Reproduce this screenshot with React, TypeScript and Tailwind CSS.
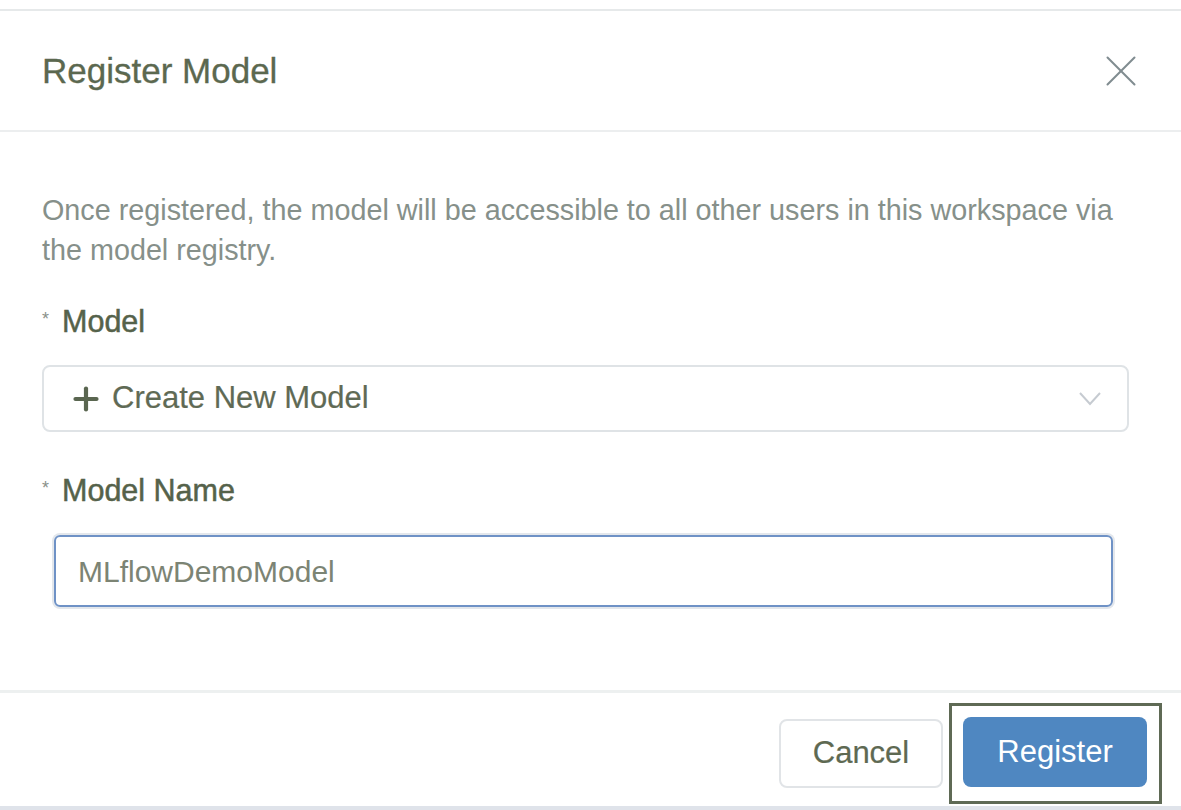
import { X, Plus } from 'lucide-react';

export default function App() {
  return (
    <div className="w-[1181px] h-[810px] bg-white font-[family-name:'Liberation_Sans',Arial,sans-serif] overflow-hidden">
      <div className="h-[9px]" />
      <div className="h-[2px] bg-[#e6e9ea]" />

      <header className="h-[119px] flex items-center justify-between pl-[42px] pr-[33px]">
        <h1 className="text-[35px] leading-[40px] text-[#5b684f] [-webkit-text-stroke:0.3px]">Register Model</h1>
        <X className="w-[54px] h-[54px] text-[#808c90]" strokeWidth={0.9} />
      </header>
      <div className="h-[2px] bg-[#eceeef]" />

      <main className="pt-[58px] pl-[42px] h-[558px]">
        <p className="text-[28.75px] leading-[40px] text-[#86908a] whitespace-nowrap">
          Once registered, the model will be accessible to all other users in this workspace via
          <br />
          the model registry.
        </p>

        <label className="mt-[32px] flex items-center h-[40px] text-[30.5px] text-[#55624a] [-webkit-text-stroke:0.5px]">
          <span className="text-[18px] text-[#8a918a] mr-[13px] -mt-[6px] [-webkit-text-stroke:0px]">*</span>
          Model
        </label>

        <div className="mt-[23px] w-[1087px] h-[67px] border-2 border-[#dfe3e6] rounded-[8px] flex items-center pl-[24px] pr-[25px]">
          <Plus className="w-[36px] h-[36px] text-[#5a6650]" strokeWidth={2.8} />
          <span className="ml-[8px] text-[31px] text-[#5f6a55] [-webkit-text-stroke:0.2px]">Create New Model</span>
          <svg className="ml-auto w-[24px] h-[18px] text-[#c6cbd1]" viewBox="0 0 24 18" fill="none" stroke="currentColor" strokeWidth={2}>
            <polyline points="2,3 12,14 22,3" />
          </svg>
        </div>

        <label className="mt-[39px] flex items-center h-[40px] text-[30.5px] text-[#55624a] [-webkit-text-stroke:0.5px]">
          <span className="text-[18px] text-[#8a918a] mr-[13px] -mt-[6px] [-webkit-text-stroke:0px]">*</span>
          Model Name
        </label>

        <div className="mt-[24px] ml-[12px] w-[1059px] h-[72px] rounded-[6px] border-2 border-[#6f92c6] ring-2 ring-[#e3e7ec] flex items-center pl-[22px]">
          <span className="text-[30px] text-[#7c8474]">MLflowDemoModel</span>
        </div>
      </main>

      <div className="h-[3px] bg-[#edf0f0]" />
      <footer className="pt-[10px] pr-[19px] flex items-center justify-end">
        <button className="w-[164px] h-[69px] border-2 border-[#e1e4e7] rounded-[8px] text-[31px] text-[#5e6952] bg-white [-webkit-text-stroke:0.2px]">
          Cancel
        </button>
        <div className="ml-[6px] w-[213px] h-[101px] border-[3px] border-[#5f6a55] pt-[11px] pl-[11px]">
          <button className="w-[184px] h-[70px] rounded-[8px] bg-[#4f87c1] text-[31px] text-white">
            Register
          </button>
        </div>
      </footer>
      <div className="h-[2px]" />
      <div className="h-[4px] bg-[#dfe3ea]" />
    </div>
  );
}
